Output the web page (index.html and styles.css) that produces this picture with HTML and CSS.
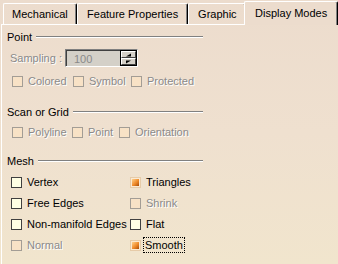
FILE: index.html
```html
<!DOCTYPE html>
<html lang="en">

<head>
    <meta charset="UTF-8">
    <title>Display Modes</title>
    <link rel="stylesheet" href="styles.css">
</head>

<body>
    <div class="tabs">
        <div class="tab tab-mech">Mechanical</div>
        <div class="tab tab-feat">Feature Properties</div>
        <div class="tab tab-graphic">Graphic</div>
        <div class="tab tab-display selected">Display Modes</div>
    </div>

    <div class="panel">
        <!-- Point -->
        <div class="group-head head-point"><span>Point</span><div class="rule"></div></div>
        <div class="sampling">
            <span class="off">Sampling :</span>
            <div class="spin">
                <div class="spin-field">100</div>
                <div class="spin-btns">
                    <div class="spin-btn"><svg width="7" height="4" viewBox="0 0 7 4"><path d="M1 3.5 L6 0.5 V3.5 Z" fill="#000"/></svg></div>
                    <div class="spin-btn"><svg width="7" height="4" viewBox="0 0 7 4"><path d="M1 0.5 H6 L1 3.5 Z" fill="#000"/></svg></div>
                </div>
            </div>
        </div>
        <div class="checks checks-point">
            <div class="check"><span class="box box-off"></span><span class="off">Colored</span></div>
            <div class="check"><span class="box box-off"></span><span class="off">Symbol</span></div>
            <div class="check"><span class="box box-off"></span><span class="off">Protected</span></div>
        </div>

        <!-- Scan or Grid -->
        <div class="group-head head-scan"><span>Scan or Grid</span><div class="rule"></div></div>
        <div class="checks checks-scan">
            <div class="check"><span class="box box-off"></span><span class="off">Polyline</span></div>
            <div class="check"><span class="box box-off"></span><span class="off">Point</span></div>
            <div class="check"><span class="box box-off"></span><span class="off">Orientation</span></div>
        </div>

        <!-- Mesh -->
        <div class="group-head head-mesh"><span>Mesh</span><div class="rule"></div></div>
        <div class="mesh">
            <div class="check"><span class="box"></span><span>Vertex</span></div>
            <div class="check"><span class="box box-on"></span><span>Triangles</span></div>
            <div class="check"><span class="box"></span><span>Free Edges</span></div>
            <div class="check"><span class="box box-off"></span><span class="off">Shrink</span></div>
            <div class="check"><span class="box"></span><span>Non-manifold Edges</span></div>
            <div class="check"><span class="box"></span><span>Flat</span></div>
            <div class="check"><span class="box box-off"></span><span class="off">Normal</span></div>
            <div class="check"><span class="box box-on"></span><span class="focus">Smooth</span></div>
        </div>
    </div>
</body>

</html>
```

FILE: styles.css
```css
*,
*::before,
*::after {
    box-sizing: border-box;
}

body {
    margin: 0;
    width: 338px;
    height: 264px;
    overflow: hidden;
    font-family: "Liberation Sans", Arial, sans-serif;
    font-size: 11px;
    color: #000;
    background: linear-gradient(#ecdccd, #efe0cf 50%, #f1e5cd);
}

.tabs {
    display: flex;
    align-items: flex-end;
    height: 24px;
    padding-left: 3px;
}

.tab {
    height: 21px;
    display: flex;
    align-items: center;
    justify-content: center;
    border-top: 1px solid #fff;
    border-left: 1px solid #fff;
    border-right: 1px solid #000;
    box-shadow: inset -1px 0 #808080;
    border-radius: 2px 2px 0 0;
    padding-bottom: 1px;
}

.tab-mech {
    width: 74px;
}

.tab-feat {
    width: 112px;
}

.tab-graphic {
    width: 58px;
}

.tab-display {
    width: 94px;
}

.selected {
    position: relative;
    z-index: 1;
    height: 24px;
    margin-left: -2px;
    margin-bottom: -1px;
    padding-bottom: 2px;
    background: #ecdccd;
}

.panel {
    border-top: 1px solid #fff;
    border-left: 1px solid #fff;
    margin-left: 1px;
    height: 240px;
    padding-left: 5px;
    display: flex;
    flex-direction: column;
}

.group-head {
    display: flex;
    align-items: center;
    width: 196px;
    height: 14px;
}

.rule {
    flex: 1;
    height: 2px;
    margin-left: 4px;
    margin-top: -1px;
    border-top: 1px solid #808080;
    border-bottom: 1px solid #fff;
}

.head-point {
    margin-top: 5px;
}

.head-scan {
    margin-top: 17px;
}

.head-mesh {
    margin-top: 15px;
}

.off {
    color: #8a8a8a;
    text-shadow: 1px 1px 0 #fff;
}

.sampling {
    display: flex;
    align-items: center;
    height: 18px;
    margin-top: 5px;
    padding-left: 3px;
    gap: 3px;
}

.spin {
    display: flex;
    height: 18px;
    border-top: 1px solid #808080;
    border-left: 1px solid #808080;
    border-right: 1px solid #fff;
    border-bottom: 1px solid #fff;
}

.spin-field {
    width: 54px;
    background: #d4d0c8;
    color: #8a8a8a;
    padding-left: 7px;
    line-height: 16px;
    border-top: 1px solid #404040;
    border-left: 1px solid #404040;
}

.spin-btns {
    display: flex;
    flex-direction: column;
    width: 17px;
    border: 1px solid #000;
}

.spin-btn {
    flex: 1;
    display: flex;
    align-items: center;
    justify-content: center;
    background: #d4d0c8;
    border-top: 1px solid #fff;
    border-left: 1px solid #fff;
    border-bottom: 1px solid #404040;
    border-right: 1px solid #404040;
}

.checks {
    display: grid;
    height: 14px;
    padding-left: 5px;
}

.checks-point {
    margin-top: 7px;
    grid-template-columns: 61px 58px auto;
}

.checks-scan {
    margin-top: 6px;
    grid-template-columns: 60px 47px auto;
}

.check {
    display: flex;
    align-items: center;
    gap: 5px;
    height: 14px;
    white-space: nowrap;
}

.box {
    position: relative;
    flex: none;
    width: 11px;
    height: 11px;
    border: 1px solid #404040;
    background: #ffffe4;
}

.box-off {
    border-color: #a39d95;
    background: #f8e2c6;
}

.box-on {
    border-color: #e6cba8;
    background: #fbe9d2;
}

.box-on::after {
    content: "";
    position: absolute;
    left: 1px;
    top: 1px;
    width: 7px;
    height: 7px;
    background: linear-gradient(135deg, #ffd28c, #ef8a2a 55%, #a84c08);
}

.mesh {
    display: grid;
    grid-template-columns: 119px auto;
    row-gap: 7px;
    margin-top: 7px;
    padding-left: 4px;
}

.focus {
    border: 1px dotted #000;
    padding: 0 1px;
    margin-left: -3px;
    line-height: 14px;
}
```
